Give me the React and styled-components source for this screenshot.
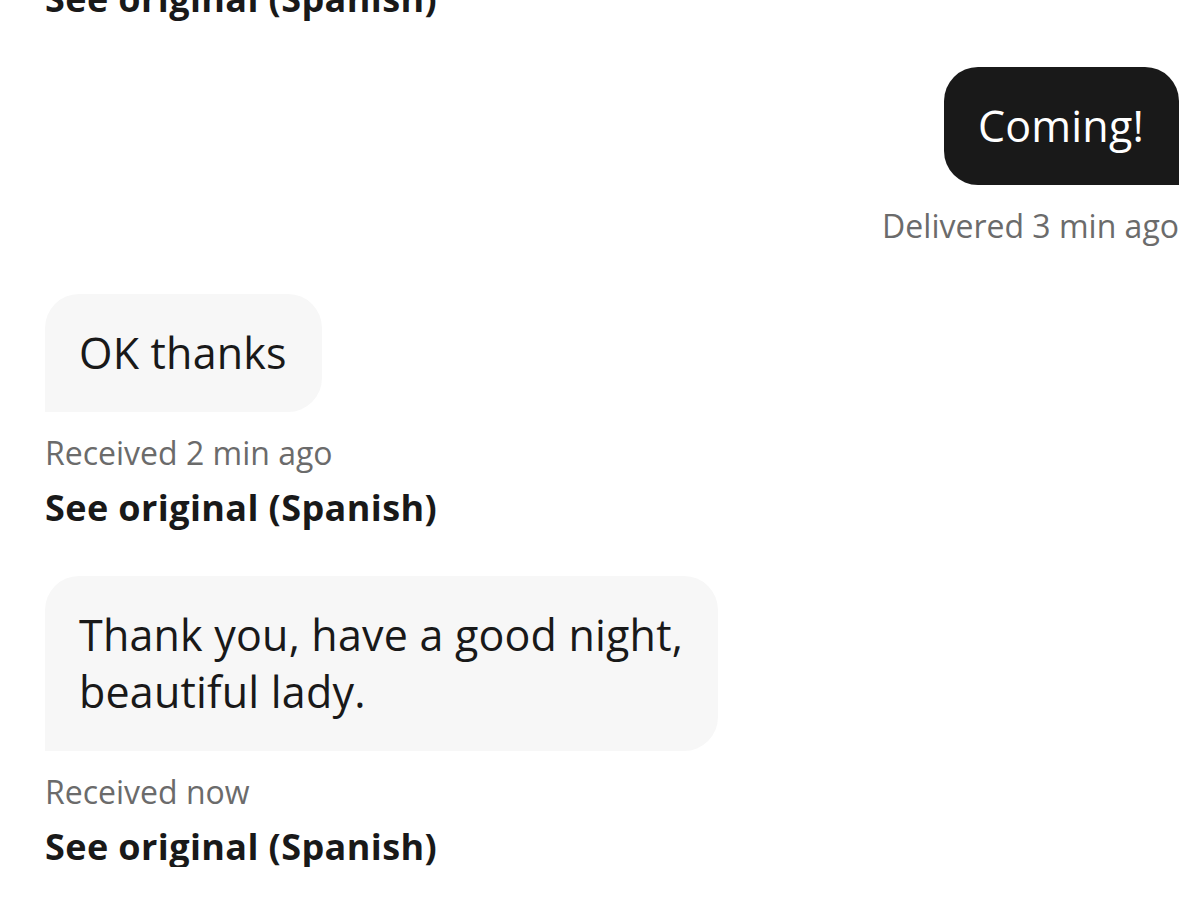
import styled, { createGlobalStyle } from 'styled-components';

const GlobalStyle = createGlobalStyle`
  html, body {
    margin: 0;
    padding: 0;
    background: #ffffff;
    overflow: hidden;
  }
  body {
    font-family: "Open Sans", Lato, sans-serif;
    color: #191919;
  }
`;

const messages = [
  { id: 0, from: 'them', text: '', meta: null, translated: true },
  { id: 1, from: 'me', text: 'Coming!', meta: 'Delivered 3 min ago' },
  { id: 2, from: 'them', text: 'OK thanks', meta: 'Received 2 min ago', translated: true },
  {
    id: 3,
    from: 'them',
    text: ['Thank you, have a good night,', 'beautiful lady.'],
    meta: 'Received now',
    translated: true,
  },
];

const App = () => (
  <>
    <GlobalStyle />
    <Thread>
      {messages.map((m) => (
        <Group key={m.id} $mine={m.from === 'me'}>
          {m.text && (
            <Bubble $mine={m.from === 'me'}>
              {Array.isArray(m.text)
                ? m.text.map((line, i) => <Line key={i}>{line}</Line>)
                : m.text}
            </Bubble>
          )}
          {m.meta && <Meta>{m.meta}</Meta>}
          {m.translated && <SeeOriginal>See original (Spanish)</SeeOriginal>}
        </Group>
      ))}
    </Thread>
  </>
);

const Thread = styled.div`
  display: flex;
  flex-direction: column;
  padding: 0 20px 0 45px;
  margin-top: -21px;
  gap: 48px;
`;

const Group = styled.div`
  display: flex;
  flex-direction: column;
  align-items: ${({ $mine }) => ($mine ? 'flex-end' : 'flex-start')};
`;

const Bubble = styled.div`
  padding: 30px 35px 31px 34px;
  font-size: 43px;
  line-height: 57px;
  letter-spacing: 0.2px;
  background: ${({ $mine }) => ($mine ? '#191919' : '#f7f7f7')};
  color: ${({ $mine }) => ($mine ? '#ffffff' : '#191919')};
  border-radius: ${({ $mine }) => ($mine ? '34px 34px 0 34px' : '34px 34px 34px 0')};
`;

const Line = styled.div`
  white-space: nowrap;
`;

const Meta = styled.div`
  margin-top: 21px;
  font-size: 32px;
  line-height: 40px;
  color: #6b6b6b;
`;

const SeeOriginal = styled.div`
  font-size: 36px;
  line-height: 40px;
  font-weight: 700;
  letter-spacing: 0.4px;
  color: #191919;

  &:not(:first-child) {
    margin-top: 15px;
  }
`;

export default App;
